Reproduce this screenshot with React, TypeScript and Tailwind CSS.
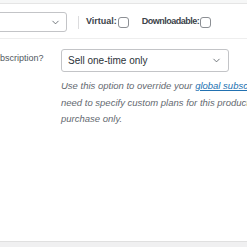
import { ChevronDown } from 'lucide-react';

function Check() {
  return <span className="ml-[1px] inline-block h-[11px] w-[11px] shrink-0 rounded-[3px] border border-[#8c8f94] bg-white" />;
}

export default function App() {
  return (
    <div
      className="flex h-[247px] w-[247px] flex-col overflow-hidden bg-white text-[#3c434a]"
      style={{ fontFamily: '"Liberation Sans", Arial, sans-serif' }}
    >
      {/* top edge of the tab strip */}
      <div className="h-[4px] shrink-0 border-b border-[#e5e5e5] bg-[#f6f7f7]" />

      {/* product type row */}
      <div className="flex h-[35px] shrink-0 items-center border-b border-[#eeeeee] pt-[2px]">
        <div className="-ml-[14px] flex h-[20px] w-[81px] items-center justify-end rounded-[3px] border border-[#c3c4c7] pr-[5px]">
          <ChevronDown size={11} strokeWidth={1.75} className="text-[#50575e]" />
        </div>
        <span className="ml-[11px] h-[13px] w-px bg-[#dcdcde]" />
        <span className="ml-[7px] text-[9px] font-bold">Virtual:</span>
        <Check />
        <span className="ml-[13px] text-[9px] font-bold tracking-[-0.5px]">Downloadable:</span>
        <Check />
      </div>

      {/* subscription row */}
      <div className="flex pt-[10px]">
        <div className="w-[61px] shrink-0 overflow-hidden pt-[3px]">
          <div className="-ml-[11px] whitespace-nowrap text-[9px] text-[#50575e]">Subscription?</div>
        </div>
        <div className="min-w-0 flex-1">
          <div className="flex h-[23px] w-[168px] items-center justify-between rounded-[3px] border border-[#c3c4c7] pl-[6px] pr-[6px] text-[10px] text-[#2c3338]">
            <span>Sell one-time only</span>
            <ChevronDown size={11} strokeWidth={1.75} className="text-[#50575e]" />
          </div>
          <div className="mt-[6px] whitespace-nowrap text-[9.5px] italic leading-[16.5px] text-[#646970]">
            <div>
              Use this option to override your{' '}
              <a className="text-[#2271b1] underline">global subscription settings</a>. You only
            </div>
            <div>need to specify custom plans for this product if you want to sell it as a one-time</div>
            <div>purchase only.</div>
          </div>
        </div>
      </div>

      <div className="flex-1" />
      <div className="h-[6px] shrink-0 border-t border-[#e0e0e0] bg-[#f0f0f1]" />
    </div>
  );
}
